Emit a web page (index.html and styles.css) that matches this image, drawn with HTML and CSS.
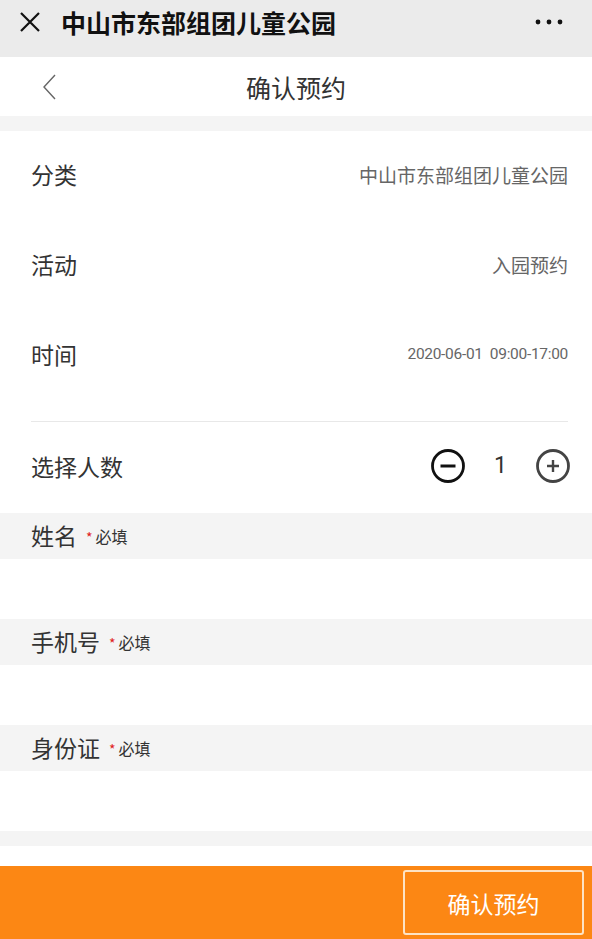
FILE: index.html
```html
<!DOCTYPE html>
<html lang="zh-CN">
<head>
    <meta charset="utf-8">
    <meta name="viewport" content="width=device-width, initial-scale=1">
    <title>确认预约</title>
    <link rel="stylesheet" href="styles.css">
</head>
<body>

<div class="topbar">
    <svg class="close-icon" width="22" height="22" viewBox="0 0 22 22">
        <path d="M2 2 L20 20 M20 2 L2 20" stroke="#111" stroke-width="2.2" fill="none"/>
    </svg>
    <span class="topbar-title">中山市东部组团儿童公园</span>
    <svg class="more" width="28" height="6" viewBox="0 0 28 6">
        <circle cx="3" cy="3" r="2.4" fill="#111"/>
        <circle cx="14" cy="3" r="2.4" fill="#111"/>
        <circle cx="25" cy="3" r="2.4" fill="#111"/>
    </svg>
</div>

<div class="navbar">
    <svg class="back-icon" width="16" height="28" viewBox="0 0 16 28">
        <path d="M14 2 L3 14 L14 26" stroke="#666" stroke-width="1.4" fill="none"/>
    </svg>
    <span class="nav-title">确认预约</span>
</div>

<div class="gap"></div>

<div class="info">
    <div class="row">
        <span class="label">分类</span>
        <span class="value">中山市东部组团儿童公园</span>
    </div>
    <div class="row">
        <span class="label">活动</span>
        <span class="value">入园预约</span>
    </div>
    <div class="row last">
        <span class="label">时间</span>
        <span class="value time">2020-06-01&nbsp; 09:00-17:00</span>
    </div>
    <div class="row count-row">
        <span class="label">选择人数</span>
        <div class="stepper">
            <svg width="36" height="36" viewBox="0 0 36 36">
                <circle cx="18" cy="18" r="15.5" stroke="#111" stroke-width="2.8" fill="none"/>
                <path d="M10.5 18 H25.5" stroke="#111" stroke-width="3"/>
            </svg>
            <span class="count">1</span>
            <svg width="36" height="36" viewBox="0 0 36 36">
                <circle cx="18" cy="18" r="15.5" stroke="#444" stroke-width="2.8" fill="none"/>
                <path d="M12 18 H24 M18 12 V24" stroke="#444" stroke-width="2.4"/>
            </svg>
        </div>
    </div>
</div>

<div class="field">
    <div class="field-head">姓名 <span class="req"><i>*</i>必填</span></div>
    <textarea class="field-input"></textarea>
</div>
<div class="field">
    <div class="field-head">手机号 <span class="req"><i>*</i>必填</span></div>
    <textarea class="field-input"></textarea>
</div>
<div class="field">
    <div class="field-head">身份证 <span class="req"><i>*</i>必填</span></div>
    <textarea class="field-input"></textarea>
</div>

<div class="gap"></div>

<div class="footer">
    <button class="submit">确认预约</button>
</div>

</body>
</html>
```

FILE: styles.css
```css
body {
    margin: 0;
    font-family: "Noto Sans CJK SC", "Noto Sans", sans-serif;
    color: #333;
    background: #fff;
}

.topbar {
    height: 57px;
    box-sizing: border-box;
    background: #ebebeb;
    display: flex;
    align-items: center;
    padding: 0 29px 13px 19px;
}

.close-icon {
    flex: none;
}

.topbar-title {
    margin-left: 20px;
    font-size: 25px;
    font-weight: 700;
    color: #111;
    flex: 1;
}

.navbar {
    height: 59px;
    display: flex;
    align-items: center;
    justify-content: center;
    position: relative;
}

.back-icon {
    position: absolute;
    left: 41px;
    top: 16px;
}

.nav-title {
    font-size: 25px;
    color: #333;
}

.gap {
    height: 15px;
    background: #f4f4f4;
}

.info {
    padding: 0 24px 0 31px;
}

.row {
    height: 90px;
    box-sizing: border-box;
    padding-bottom: 4px;
    display: flex;
    align-items: center;
    justify-content: space-between;
}

.row.last {
    margin-bottom: 20px;
}

.label {
    font-size: 23px;
    color: #333;
}

.value {
    font-size: 19px;
    color: #666;
}

.time {
    font-family: Roboto, sans-serif;
    font-size: 15.5px;
    letter-spacing: -0.3px;
}

.count-row {
    height: 92px;
    border-top: 1px solid #e8e8e8;
}

.stepper {
    display: flex;
    align-items: center;
    gap: 28px;
    margin-right: -3px;
}

.count {
    font-family: Roboto, sans-serif;
    font-size: 23px;
    color: #333;
}

.field-head {
    height: 46px;
    box-sizing: border-box;
    padding: 0 0 3px 31px;
    background: #f4f4f4;
    display: flex;
    align-items: center;
    font-size: 23px;
    color: #333;
}

.req {
    font-size: 16px;
    margin-left: 9px;
    color: #333;
    padding-top: 3px;
}

.req i {
    font-style: normal;
    color: #e02020;
    font-size: 14px;
    margin-right: 3px;
}

.field-input {
    display: block;
    width: 100%;
    height: 60px;
    border: none;
    outline: none;
    resize: none;
    margin: 0;
    padding: 0 31px;
    box-sizing: border-box;
    font-family: inherit;
}

.footer {
    margin-top: 20px;
    height: 73px;
    background: #fc8714;
    display: flex;
    justify-content: flex-end;
    align-items: center;
    padding-right: 8px;
}

.submit {
    width: 181px;
    height: 65px;
    background: transparent;
    border: 2px solid #fde3c4;
    border-radius: 3px;
    color: #fff;
    font-family: inherit;
    font-size: 23px;
}
```
